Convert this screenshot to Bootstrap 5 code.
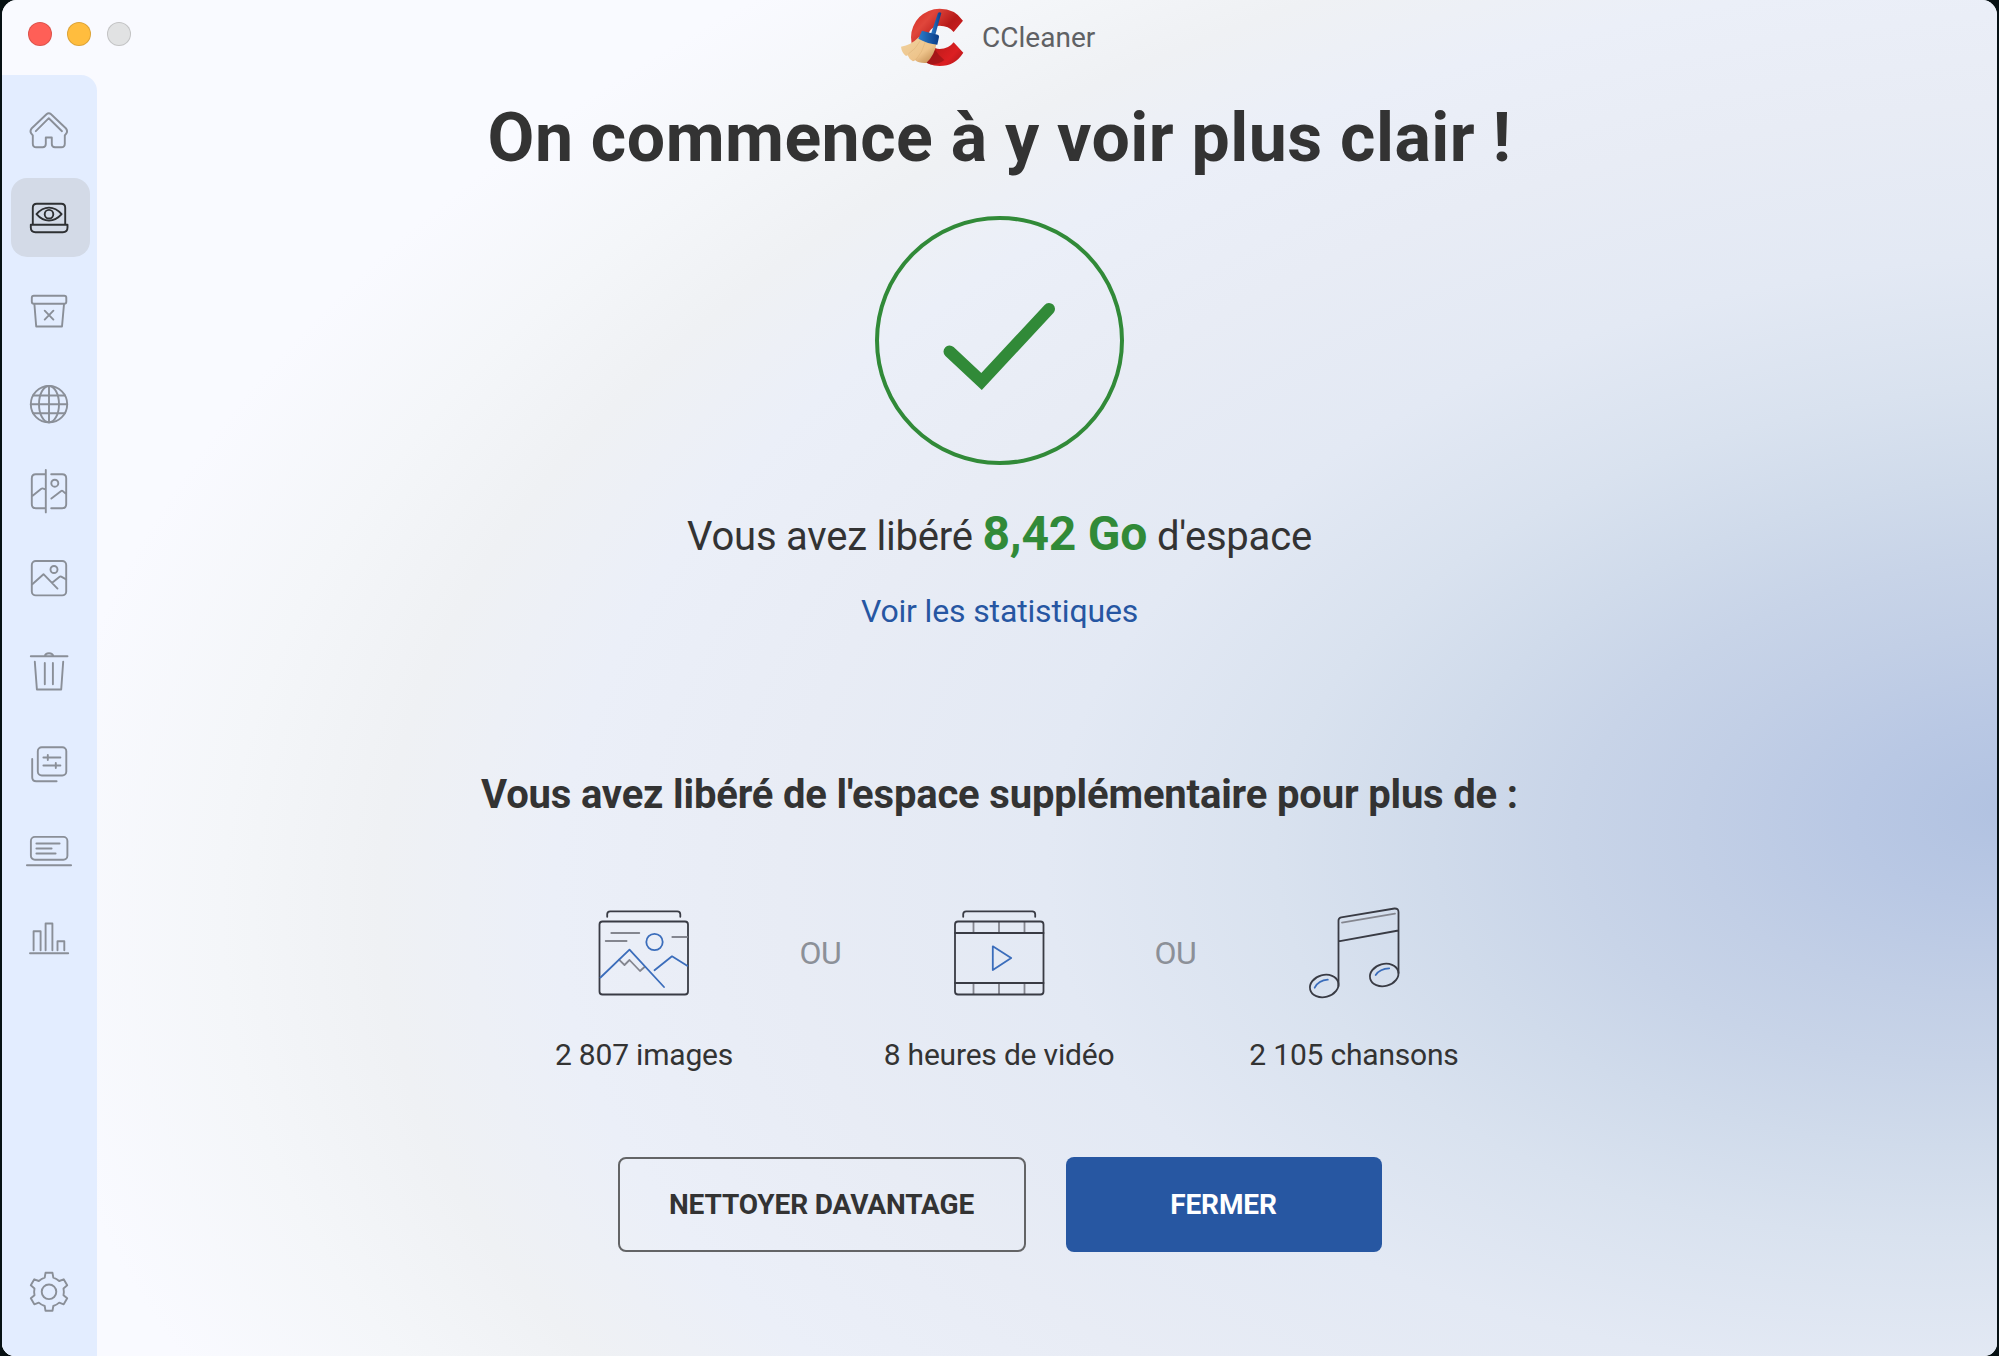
<!DOCTYPE html>
<html lang="fr">
<head>
<meta charset="utf-8">
<title>CCleaner</title>
<meta name="viewport" content="width=device-width, initial-scale=1">
<link href="https://cdn.jsdelivr.net/npm/bootstrap@5.3.0/dist/css/bootstrap.min.css" rel="stylesheet">
<style>
  body { height: 1356px; padding: 0 2px; background: #071114; overflow: hidden; font-family: Roboto, "Liberation Sans", sans-serif; color: #333; }
  .app-window { border-radius: 15px 15px 13px 13px; isolation: isolate; background: #f9faff; }
  .app-window::before { content: ""; position: absolute; z-index: -1; inset: -400px; transform: rotate(-5deg); transform-origin: 2410px 1210px; background: radial-gradient(1760px 1010px at 2410px 1210px, #b1c2e1 0%, #b9c8e4 9%, #c2cfe6 18%, #c8d4e8 25%, #d0dbeb 33%, #d9e2ef 42%, #e3e9f4 55%, #e8ecf5 70%, #ebeff8 83%, #eff1f4 93%, #f4f6f9 102%, #f9faff 113%); }
  .titlebar { height: 75px; padding-right: 3px; }
  .lights { left: 25.5px; top: 21.5px; gap: 15.5px; }
  .light { width: 24px; height: 24px; border-radius: 50%; border: 1px solid #0002; }
  .light-close { background: #ff5f57; } .light-min { background: #ffbd3e; } .light-max { background: #e1e2e3; }
  .app-name { font-size: 28px; line-height: 40px; color: #5f6164; margin-left: 18px; }
  .sidebar { width: 95px; background: #e3edff; border-top-right-radius: 16px; padding: 12px 0 25px 9px; }
  .side-link { width: 79px; height: 79px; margin: 4px 0; border-radius: 16px; color: #8a8f98; flex: none; }
  .side-link.active { background: #d3dae7; color: #2e3033; }
  .side-gap { margin-top: 10px; }
  .side-link svg, .saving svg { fill: none; stroke: currentColor; stroke-width: 1.9; stroke-linecap: round; stroke-linejoin: round; }
  .side-link svg { margin-right: .6px; }
  .results { padding-right: 95px; }
  .headline { font-size: 68px; line-height: 122px; font-weight: 700; letter-spacing: .48px; margin: 1.5px 0 0; }
  .check { margin-top: 17.5px; }
  .freed { font-size: 40px; line-height: 60px; letter-spacing: -.21px; margin: 42px 0 0; }
  .freed strong { font-size: 48px; line-height: 1; color: #318a38; font-weight: 700; }
  .stats-link { font-size: 32px; line-height: 40px; letter-spacing: -.15px; margin-top: 24px; color: #2656a2; text-decoration: none; }
  .subhead { font-size: 40px; line-height: 50px; font-weight: 700; letter-spacing: -.17px; margin: 139px 0 0; }
  .savings { margin-top: 81px; height: 174px; }
  .saving { width: 240px; color: #393b44; }
  .saving svg { stroke-width: 1.8; margin-right: .4px; }
  .saving .hl { stroke: #3b6dbb; } .saving .dim { stroke: #84868f; }
  .saving span { font-size: 30px; line-height: 40px; letter-spacing: -.2px; margin: 24px 1px 0 0; color: #333; }
  .or-word { width: 115px; padding-right: 3px; font-size: 32px; line-height: 105px; letter-spacing: -.3px; color: #8c9098; text-align: center; }
  .actions { margin-top: 82px; gap: 40px; }
  .action { height: 95px; font-size: 28px; font-weight: 700; letter-spacing: -.13px; border-radius: 8px; padding: 0; }
  .action-more { width: 408px; border: 2px solid #636466; color: #333; }
  .action-close { width: 316px; background: #2757a2; color: #fff; }
</style>
<script src="https://cdn.jsdelivr.net/npm/bootstrap@5.3.0/dist/js/bootstrap.bundle.min.js"></script>
</head>
<body>
<div class="app-window h-100 d-flex flex-column overflow-hidden position-relative">
  <header class="titlebar d-flex align-items-center justify-content-center flex-shrink-0">
    <div class="lights position-absolute d-flex"><i class="light light-close"></i><i class="light light-min"></i><i class="light light-max"></i></div>
    <svg width="63.3" height="58.7" viewBox="60 24 190 176">
      <defs>
        <linearGradient id="ring" x1="0" y1="0" x2="1" y2="1"><stop offset="0" stop-color="#d5281f"/><stop offset=".25" stop-color="#e0463b"/><stop offset=".5" stop-color="#b81a19"/><stop offset=".8" stop-color="#dc1f22"/><stop offset="1" stop-color="#a81519"/></linearGradient>
        <linearGradient id="hair" x1="0" y1="0" x2="1" y2="1"><stop offset="0" stop-color="#f0d3a0"/><stop offset=".6" stop-color="#eec48b"/><stop offset="1" stop-color="#b98146"/></linearGradient>
        <linearGradient id="stick" x1="0" y1="0" x2="1" y2="0"><stop offset="0" stop-color="#2d7dcc"/><stop offset="1" stop-color="#0a3c87"/></linearGradient>
      </defs>
      <path fill="url(#ring)" d="M246 62 218 96Q203 77 176 77A35 35 0 0 0 176 147Q203 147 218 127L247 158Q222 198 176 198A86 86 0 0 1 176 26Q222 26 246 62Z"/>
      <path fill="#8d1216" d="M160 146Q174 168 190 180Q176 192 150 194L136 188Z" opacity=".6"/>
      <path fill="url(#hair)" d="M113 112Q90 136 60 140Q62 158 75 168L80 166Q84 178 96 184L103 181Q112 190 136 189Q160 168 167 130Z"/>
      <path fill="none" stroke="#cf9f62" stroke-width="1.5" opacity=".6" d="M118 122Q104 148 82 162M133 126Q124 158 104 180"/>
      <path fill="url(#stick)" d="M171 39Q176 34 181 39L162 108 149 104Z"/>
      <path fill="url(#stick)" d="M123 92 170 104Q176 106 174 112L169 134Q142 132 112 116Z"/>
    </svg>
    <span class="app-name">CCleaner</span>
  </header>
  <div class="d-flex flex-grow-1">
    <nav class="sidebar nav flex-column flex-nowrap flex-shrink-0">
      <a class="side-link d-flex align-items-center justify-content-center" aria-label="Accueil"><svg width="48" height="48"><path d="M20.5 7.3 5.8 21.2Q3.5 24.2 5.2 26.4L6.8 28.4V36.7Q6.8 40.2 10.3 40.2H16.6Q19.8 40.2 19.8 37V30.5H25.8V37Q25.8 40.2 29 40.2H35.3Q38.8 40.2 38.8 36.7V28.4L40.4 26.4Q42.1 24.2 39.8 21.2L25.1 7.3Q22.8 5.2 20.5 7.3ZM9.8 24.2 22.8 11.2 36 24.2"/></svg></a>
      <a class="side-link active d-flex align-items-center justify-content-center" aria-label="Nettoyage"><svg width="48" height="48"><path d="M6.8 30.8V13.8Q6.8 9.8 10.8 9.8H35.2Q39.2 9.8 39.2 13.8V30.8M4.8 30.8H41.5V33.5Q41.5 38.2 36.8 38.2H9.5Q4.8 38.2 4.8 33.5ZM10.5 20.2Q16 13.6 23 13.6T35.6 20.2Q30 26.6 23 26.6T10.5 20.2Z"/><circle cx="23" cy="20.2" r="4.3"/></svg></a>
      <a class="side-link side-gap d-flex align-items-center justify-content-center" aria-label="Désinstaller"><svg width="48" height="48"><rect x="5.8" y="8.8" width="34.5" height="8" rx="2"/><path d="M8.4 17.2 10.2 39.5H36L38 17.2M18.7 23.7 27.4 32.6M27.4 23.7 18.7 32.6"/></svg></a>
      <a class="side-link side-gap d-flex align-items-center justify-content-center" aria-label="Navigateurs"><svg width="48" height="48"><circle cx="23" cy="24.2" r="18.2"/><ellipse cx="23" cy="24.2" rx="10" ry="18.2"/><path d="M23 6V42.4M4.8 24.2H41.2M7 15.5H39M7 33.2H39"/></svg></a>
      <a class="side-link d-flex align-items-center justify-content-center" aria-label="Photos similaires"><svg width="48" height="48"><path d="M19.8 7.2H9.8Q5.8 7.2 5.8 11.2V37.2Q5.8 41.2 9.8 41.2H19.8M25.2 7.2H36.2Q40.2 7.2 40.2 11.2V37.2Q40.2 41.2 36.2 41.2H25.2M19.8 3V45.4M6.3 29 15 21.9Q16.2 21 17.4 21.6L19.8 22.6M25.4 31.6 35.2 24Q36 23.5 36.8 24.1L40.2 27"/><circle cx="28.8" cy="16.2" r="3.5"/></svg></a>
      <a class="side-link d-flex align-items-center justify-content-center" aria-label="Images"><svg width="48" height="48"><rect x="5.8" y="7" width="34.4" height="34.4" rx="4"/><circle cx="28" cy="15.5" r="3.5"/><path d="M6.3 30.2 17.5 20.2 31.5 34.6M26.2 28.8 33.6 22.8Q34.3 22.2 35.2 22.7L40.2 25.4"/></svg></a>
      <a class="side-link side-gap d-flex align-items-center justify-content-center" aria-label="Corbeille"><svg width="48" height="48"><path d="M4.8 9.2H41.5M18.9 9Q19.3 6.2 23 6.2T27.2 9M8.8 14.6 10.9 42.5H35.2L37.2 14.6M18.8 16V37.2M26.9 16V37.2"/></svg></a>
      <a class="side-link side-gap d-flex align-items-center justify-content-center" aria-label="Applications"><svg width="48" height="48"><rect x="11.8" y="7.2" width="28.5" height="28.3" rx="4"/><path d="M6.2 19V37.2Q6.2 41.2 10.2 41.2H30.6M17.4 17.5H34.4M21.8 15V20M17.4 25.5H34.4M29.8 23V28"/></svg></a>
      <a class="side-link d-flex align-items-center justify-content-center" aria-label="Démarrage"><svg width="48" height="48"><rect x="4.9" y="9.9" width="36.5" height="22.8" rx="4"/><path d="M.9 38.2H45.1M10.4 16.5H33.6M10.4 21.5H25.6M10.4 26.5H29.6"/></svg></a>
      <a class="side-link d-flex align-items-center justify-content-center" aria-label="Statistiques"><svg width="48" height="48"><path d="M4 39.2H42.2M7.6 36.2V17.3H14.6V36.2M19.6 36.2V9.5H26.4V36.2M31.5 36.2V27.3H38.3V36.2"/></svg></a>
      <a class="side-link mt-auto mb-0 d-flex align-items-center justify-content-center" aria-label="Réglages"><svg width="48" height="48"><g transform="translate(23 23.8)"><circle r="7.3"/><path d="M-4.3-14.2-3.5-19H3.5L4.3-14.2Q7.5-13.2 10.2-10.8L14.7-12.5 18.2-6.5 14.5-3.4Q15.2 0 14.5 3.4L18.2 6.5 14.7 12.5 10.2 10.8Q7.5 13.2 4.3 14.2L3.5 19H-3.5L-4.3 14.2Q-7.5 13.2-10.2 10.8L-14.7 12.5-18.2 6.5-14.5 3.4Q-15.2 0-14.5-3.4L-18.2-6.5-14.7-12.5-10.2-10.8Q-7.5-13.2-4.3-14.2Z"/></g></svg></a>
    </nav>
    <main class="results flex-grow-1 d-flex flex-column align-items-center">
      <h1 class="headline">On commence à y voir plus clair !</h1>
      <svg class="check" width="249" height="249" viewBox="0 0 249 249" fill="none" stroke="#318a38"><circle cx="124.5" cy="124.5" r="122.5" stroke-width="4"/><path d="M74.5 135.5 106.5 165.5 174 93" stroke-width="12" stroke-linecap="round"/></svg>
      <p class="freed">Vous avez libéré <strong>8,42 Go</strong> d'espace</p>
      <a class="stats-link" href="#">Voir les statistiques</a>
      <h2 class="subhead">Vous avez libéré de l'espace supplémentaire pour plus de :</h2>
      <div class="savings d-flex">
        <div class="saving d-flex flex-column align-items-center">
          <svg width="120" height="110"><rect x="15.5" y="20.5" width="88.5" height="73" rx="3"/><path d="M23.2 15.8V13.3Q23.2 10.3 26.2 10.3H93.3Q96.3 10.3 96.3 13.3V15.8"/><path class="dim" d="M27.3 32H55.3M21.7 40H42.6M88.3 36H103M35 58.7 40.5 64 45.5 59 56 70 60.5 66"/><path class="hl" d="M16.5 76.5 45.5 48.7 80 86M70.5 69.3 88 55.3 103.2 64.7"/><circle class="hl" cx="70.5" cy="41" r="8.2"/></svg>
          <span>2&nbsp;807 images</span>
        </div>
        <div class="or-word">OU</div>
        <div class="saving d-flex flex-column align-items-center">
          <svg width="120" height="110"><path class="dim" d="M34.5 21V32M60 21V32M85.5 21V32M34.5 82V93M60 82V93M85.5 82V93"/><rect x="16" y="20.5" width="88.5" height="73" rx="3"/><path d="M24.2 15.8V13.3Q24.2 10.3 27.2 10.3H93.2Q96.2 10.3 96.2 13.3V15.8M16 32H104.5M16 82H104.5"/><path class="hl" d="M53.8 45.3 72.2 57 53.8 69Z"/></svg>
          <span>8 heures de vidéo</span>
        </div>
        <div class="or-word">OU</div>
        <div class="saving d-flex flex-column align-items-center">
          <svg width="120" height="110"><path d="M44.5 85V19.5Q44.5 17 47.2 16.3L100.5 7.5Q104.5 7.3 104.5 11V72M44.5 40.3 104.5 29.5"/><path class="dim" d="M48 21.7 101 12.7"/><ellipse rx="14.5" ry="11" transform="translate(30.2 85) rotate(-15)"/><ellipse rx="14.5" ry="11" transform="translate(90.2 74) rotate(-15)"/><path class="hl" d="M20.7 86.7Q24.5 79.3 33.8 78.7M81.7 74Q86 67.5 95.2 67.3"/></svg>
          <span>2&nbsp;105 chansons</span>
        </div>
      </div>
      <div class="actions d-flex">
        <button class="btn action action-more">NETTOYER DAVANTAGE</button>
        <button class="btn action action-close">FERMER</button>
      </div>
    </main>
  </div>
</div>
</body>
</html>
